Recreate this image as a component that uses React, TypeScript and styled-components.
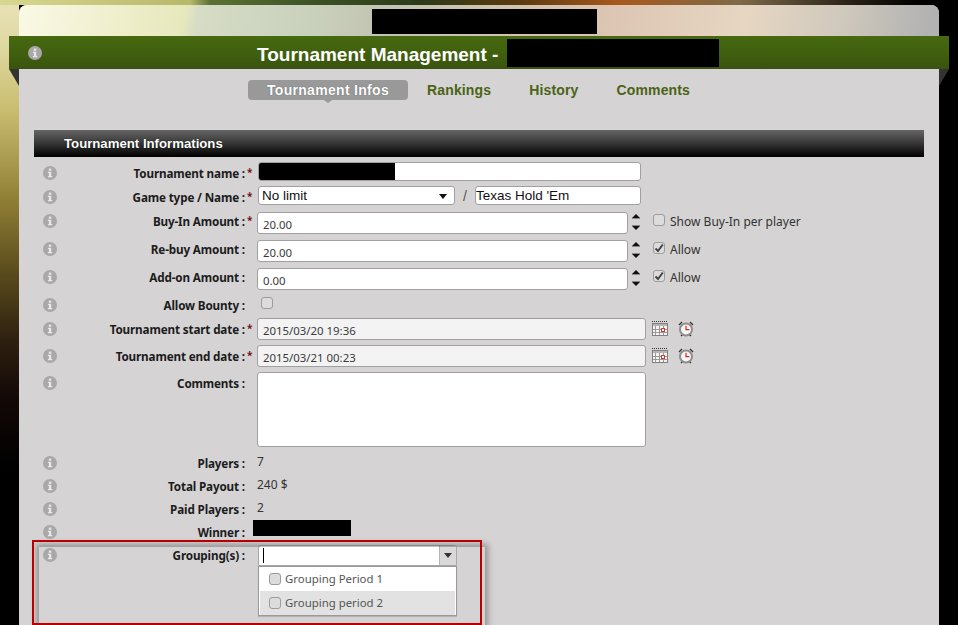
import React from "react";
import styled, { createGlobalStyle } from "styled-components";

const Global = createGlobalStyle`
  html, body { margin: 0; padding: 0; overflow: hidden; background: #000; }
  #root { width: 958px; height: 625px; overflow: hidden; }
  * { box-sizing: border-box; }
`;

const Page = styled.div`
  width: 958px;
  height: 625px;
  overflow: hidden;
  padding: 5px 19px 0;
  background:
    linear-gradient(90deg, #d8d890 0, #b7b86a 190px, #5c7234 210px, #3c5024 320px, #2c3a18 420px, #5b3a10 520px, #a85a1c 620px, #7e6a48 740px, #2a2118 850px, #000 920px) 0 0 / 100% 5px no-repeat,
    linear-gradient(180deg, #e8e2b8 0, #ded79e 50px, #c9bd70 110px, #8f7f35 200px, #5c4d1e 270px, #2e2010 340px, #120806 400px, #000 470px) 0 0 / 19px 100% no-repeat,
    #000;
`;

const Panel = styled.div`
  width: 920px;
  height: 620px;
  background: #d5d3d4;
  border-radius: 8px 8px 0 0;
`;

const TopStrip = styled.div`
  height: 31px;
  padding: 4px 0 0 353px;
  border-radius: 8px 8px 0 0;
  background: linear-gradient(100deg, #faf9e6 0, #f0f0cf 90px, #e6e8bc 165px, #d6dcc6 178px, #c9d1bc 290px, #c2c2b0 370px, #dcc4b2 570px, #e6d6c2 720px, #d0c9bd 810px, #b2b2b2 900px);
`;

const Redact = styled.div<{ $w: number; $h: number }>`
  width: ${(p) => p.$w}px;
  height: ${(p) => p.$h}px;
  background: #000;
  flex: none;
`;

const Band = styled.div`
  position: relative;
  display: flex;
  align-items: center;
  height: 33px;
  margin: 0 -10px;
  padding-left: 19px;
  background: linear-gradient(180deg, #47690f 0, #3f5e0f 60%, #39530f 100%);

  &::before, &::after {
    content: "";
    position: absolute;
    top: 33px;
    width: 0;
    height: 0;
    border-top: 17px solid #333;
  }
  &::before { left: 0; border-left: 10px solid transparent; }
  &::after { right: 0; border-right: 10px solid transparent; }
`;

const Title = styled.h1`
  margin: 4px 3px 0 215px;
  font: bold 19px/33px "Liberation Sans", Arial, sans-serif;
  color: #fff;
  white-space: pre;
`;

const Tabs = styled.nav`
  display: flex;
  height: 31px;
  padding: 11px 0 0 229px;
`;

const Tab = styled.div<{ $active?: boolean }>`
  position: relative;
  height: 20px;
  padding: 0 19px;
  font: bold 14px/20px "Liberation Sans", Arial, sans-serif;
  letter-spacing: ${(p) => (p.$active ? "0.3px" : "0.15px")};
  color: ${(p) => (p.$active ? "#fff" : "#4a6314")};
  background: ${(p) => (p.$active ? "#9a999a" : "transparent")};
  border-radius: 4px;
  ${(p) => p.$active && `
    text-shadow: 0 0 1px #555;
    &::after {
      content: "";
      position: absolute;
      left: 76px;
      top: 20px;
      border-left: 4px solid transparent;
      border-right: 4px solid transparent;
      border-top: 3px solid #9a999a;
    }
  `}
`;

const Content = styled.div`
  padding: 30px 15px 0;
`;

const SectionHeader = styled.h2`
  margin: 0 0 4px;
  height: 27px;
  padding-left: 30px;
  background: linear-gradient(180deg, #666 0, #3a3a3a 45%, #000 100%);
  font: bold 13.2px/27px "Liberation Sans", Arial, sans-serif;
  color: #fff;
  text-shadow: 0 0 1px #000;
`;

const Row = styled.div<{ $h: number }>`
  position: relative;
  display: flex;
  align-items: flex-start;
  height: ${(p) => p.$h}px;
`;

const InfoCell = styled.div`
  width: 23px;
  height: 24px;
  padding-left: 9px;
  display: flex;
  align-items: center;
  flex: none;
`;

const Label = styled.label`
  width: 188px;
  flex: none;
  text-align: right;
  font: bold 11.7px/25px "Noto Sans", "Open Sans", sans-serif;
  letter-spacing: -0.15px;
  color: #1c1c1c;
  white-space: pre;
`;

const Star = styled.span`
  width: 12px;
  flex: none;
  padding-left: 2px;
  font: bold 10px/22px "Noto Sans", sans-serif;
  color: #7a1010;
`;

const Field = styled.div<{ $top?: number }>`
  display: flex;
  align-items: flex-start;
  padding-top: ${(p) => p.$top ?? 0}px;
  flex: none;
`;

const TextBox = styled.div<{ $w: number; $h: number; $ml?: number; $bg?: string; $mono?: boolean }>`
  width: ${(p) => p.$w}px;
  height: ${(p) => p.$h}px;
  margin-left: ${(p) => p.$ml ?? 0}px;
  background: ${(p) => p.$bg ?? "#fff"};
  border: 1px solid #a0a0a0;
  border-radius: 3px;
  flex: none;
  white-space: pre;
  overflow: hidden;
  color: ${(p) => (p.$mono ? "#111" : "#3a3a3a")};
  font: ${(p) => (p.$mono ? `13.5px/${p.$h - 1}px "Liberation Sans", Arial, sans-serif` : `11.4px/${p.$h + 1}px "Noto Sans", "Open Sans", sans-serif`)};
  padding-left: ${(p) => (p.$mono ? 0 : 5)}px;
`;

const NameBox = styled(TextBox)`
  padding: 0;
`;

const SelectBox = styled(TextBox)`
  display: flex;
  justify-content: space-between;
  align-items: center;
  padding: 1px 7px 0 3px;
`;

const Slash = styled.span`
  width: 20px;
  flex: none;
  text-align: center;
  font: 14px/20px "Liberation Sans", sans-serif;
  color: #555;
`;

const Spinner = styled.div`
  width: 8px;
  height: 16px;
  margin: 2px 0 0 4px;
  flex: none;
  display: flex;
`;

const Check = styled.span`
  width: 12px;
  height: 12px;
  display: inline-flex;
  align-items: center;
  justify-content: center;
  border: 1px solid #9c9c9c;
  border-radius: 3px;
  background: #dcdcdc;
  flex: none;
`;

const CheckOption = styled.div`
  display: flex;
  align-items: flex-start;
  gap: 5px;
  margin-left: 13px;
  padding-top: 2px;
  font: 12px/16px "Noto Sans", "Open Sans", sans-serif;
  color: #333;
  white-space: pre;
`;

const BountyCheck = styled(Check)`
  margin: 4px 0 0 4px;
`;

const DateIcons = styled.div`
  display: flex;
  gap: 10px;
  margin: 3px 0 0 6px;
`;

const Value = styled.div`
  font: 12px/22px "Noto Sans", "Open Sans", sans-serif;
  color: #333;
`;

const RedactSlot = styled.div`
  margin-left: -4px;
`;

const GroupField = styled.div`
  position: relative;
  width: 199px;
  margin-left: 1px;
  margin-top: 2px;
  flex: none;
`;

const GroupInput = styled.div`
  display: flex;
  height: 21px;
  background: #fff;
  border: 1px solid #a8a8a8;
  border-radius: 3px 3px 0 0;
`;

const Caret = styled.span`
  width: 1px;
  height: 15px;
  margin: 2px 0 0 4px;
  background: #000;
`;

const GroupArrow = styled.span`
  margin-left: auto;
  width: 17px;
  display: flex;
  align-items: center;
  justify-content: center;
  background: #d9d9d9;
  border-left: 1px solid #b5b5b5;
  border-radius: 0 3px 0 0;
`;

const GroupList = styled.div`
  height: 50px;
  border: 1px solid #9a9a9a;
  padding: 0 1px 1px;
  background: #fff;
  box-shadow: 0 1px 1px rgba(0,0,0,.15);
`;

const GroupItem = styled.div<{ $hover?: boolean }>`
  display: flex;
  align-items: center;
  gap: 4px;
  height: 24px;
  padding-left: 9px;
  background: ${(p) => (p.$hover ? "#e2e2e2" : "#fff")};
  font: 11.4px/24px "Noto Sans", "Open Sans", sans-serif;
  color: #555;
`;

const Highlight = styled.div`
  position: absolute;
  left: -2px;
  top: -3px;
  width: 450px;
  height: 85px;
  pointer-events: none;

  &::before {
    content: "";
    position: absolute;
    left: 7px;
    top: 7px;
    right: -3px;
    bottom: -30px;
    box-shadow: 0 0 6px 3px rgba(0,0,0,.3);
  }
  &::after {
    content: "";
    position: absolute;
    inset: 0;
    border: 2px solid #b80000;
  }
`;

const Info = ({ s = 14 }: { s?: number }) => (
  <svg width={s} height={s} viewBox="0 0 14 14">
    <circle cx="7" cy="7" r="7" fill="#a8a8a8" />
    <rect x="5.8" y="2.6" width="2.5" height="2.2" fill="#e8e8e8" />
    <path d="M4.9 5.8h3.3v4.2h1V11.2H4.9V10h1V7H4.9z" fill="#e8e8e8" />
  </svg>
);

const ArrowDown = ({ c = "#111" }: { c?: string }) => (
  <svg width="8" height="5" viewBox="0 0 8 5">
    <path d="M0 0h8L4 5z" fill={c} />
  </svg>
);

const SpinIcon = () => (
  <svg width="8" height="16" viewBox="0 0 8 16">
    <path d="M4 0L8 4H0z" fill="#111" />
    <path d="M0 12h8L4 16z" fill="#111" />
    <path d="M0 4.5h8M0 11.5h8" stroke="#555" strokeWidth="0.6" />
  </svg>
);

const Tick = () => (
  <svg width="10" height="10" viewBox="0 0 10 10">
    <path d="M1.5 5.5L4 8l4.8-6.5" fill="none" stroke="#444" strokeWidth="2" />
  </svg>
);

const Calendar = () => (
  <svg width="16" height="15" viewBox="0 0 16 15">
    <path d="M0 .5h16" stroke="#333" strokeWidth="1" strokeDasharray="1 1" />
    <rect x="0" y="2" width="16" height="13" fill="#f4f4f4" />
    <rect x="0" y="2" width="16" height="3" fill="#b4b4b4" />
    <path d="M3.5 5v10M7.5 5v10M11.5 5v10M0 8.5h16M0 11.5h16" stroke="#999" strokeWidth="1" />
    <rect x="0.5" y="2.5" width="15" height="12" fill="none" stroke="#808080" />
    <rect x="9.5" y="7.5" width="3" height="3" fill="#fff" stroke="#e0352b" />
  </svg>
);

const Clock = () => (
  <svg width="16" height="16" viewBox="0 0 16 16">
    <path d="M1 4L4 1M15 4L12 1M3 15l1.5-1.5M13 15l-1.5-1.5" stroke="#333" strokeWidth="1.4" />
    <circle cx="8" cy="8.5" r="6" fill="#f6f6f6" stroke="#8e8e8e" strokeWidth="2" />
    <path d="M8 4.8v3.9h3.4" fill="none" stroke="#d9281e" strokeWidth="1.2" />
  </svg>
);

const Line = ({ h, label, star, children }: { h: number; label: string; star?: boolean; children?: React.ReactNode }) => (
  <Row $h={h}>
    <InfoCell><Info /></InfoCell>
    <Label>{label} :</Label>
    <Star>{star ? "*" : ""}</Star>
    {children}
  </Row>
);

const Spin = () => (
  <Spinner><SpinIcon /></Spinner>
);

export default function App() {
  return (
    <Page>
      <Global />
      <Panel>
        <TopStrip><Redact $w={225} $h={25} /></TopStrip>
        <Band>
          <Info s={14} />
          <Title>Tournament Management - </Title>
          <Redact $w={212} $h={28} />
        </Band>
        <Tabs>
          <Tab $active>Tournament Infos</Tab>
          <Tab>Rankings</Tab>
          <Tab>History</Tab>
          <Tab>Comments</Tab>
        </Tabs>
        <Content>
          <SectionHeader>Tournament Informations</SectionHeader>
          <Line h={24} label="Tournament name" star>
            <Field $top={1}>
              <NameBox $w={383} $h={19} $ml={1}><Redact $w={136} $h={19} /></NameBox>
            </Field>
          </Line>
          <Line h={24} label="Game type / Name" star>
            <Field $top={1}>
              <SelectBox $w={197} $h={19} $ml={1} $mono>No limit<ArrowDown /></SelectBox>
              <Slash>/</Slash>
              <TextBox $w={166} $h={19} $mono>Texas Hold 'Em</TextBox>
            </Field>
          </Line>
          <Line h={28} label="Buy-In Amount" star>
            <Field $top={3}>
              <TextBox $w={371} $h={22}>20.00</TextBox>
              <Spin />
              <CheckOption><Check />Show Buy-In per player</CheckOption>
            </Field>
          </Line>
          <Line h={28} label="Re-buy Amount">
            <Field $top={3}>
              <TextBox $w={371} $h={22}>20.00</TextBox>
              <Spin />
              <CheckOption><Check><Tick /></Check>Allow</CheckOption>
            </Field>
          </Line>
          <Line h={28} label="Add-on Amount">
            <Field $top={3}>
              <TextBox $w={371} $h={22}>0.00</TextBox>
              <Spin />
              <CheckOption><Check><Tick /></Check>Allow</CheckOption>
            </Field>
          </Line>
          <Line h={24} label="Allow Bounty">
            <Field><BountyCheck /></Field>
          </Line>
          <Line h={27} label="Tournament start date" star>
            <Field $top={1}>
              <TextBox $w={389} $h={22} $bg="#f3f3f3">2015/03/20 19:36</TextBox>
              <DateIcons><Calendar /><Clock /></DateIcons>
            </Field>
          </Line>
          <Line h={27} label="Tournament end date" star>
            <Field $top={1}>
              <TextBox $w={389} $h={22} $bg="#f3f3f3">2015/03/21 00:23</TextBox>
              <DateIcons><Calendar /><Clock /></DateIcons>
            </Field>
          </Line>
          <Line h={80} label="Comments">
            <Field $top={1}><TextBox $w={389} $h={75} /></Field>
          </Line>
          <Line h={23} label="Players"><Value>7</Value></Line>
          <Line h={23} label="Total Payout"><Value>240 $</Value></Line>
          <Line h={23} label="Paid Players"><Value>2</Value></Line>
          <Line h={23} label="Winner">
            <RedactSlot><Redact $w={98} $h={16} /></RedactSlot>
          </Line>
          <Row $h={82}>
            <InfoCell><Info /></InfoCell>
            <Label>Grouping(s) :</Label>
            <Star />
            <GroupField>
              <GroupInput>
                <Caret />
                <GroupArrow><ArrowDown c="#333" /></GroupArrow>
              </GroupInput>
              <GroupList>
                <GroupItem><Check />Grouping Period 1</GroupItem>
                <GroupItem $hover><Check />Grouping period 2</GroupItem>
              </GroupList>
            </GroupField>
            <Highlight />
          </Row>
        </Content>
      </Panel>
    </Page>
  );
}
